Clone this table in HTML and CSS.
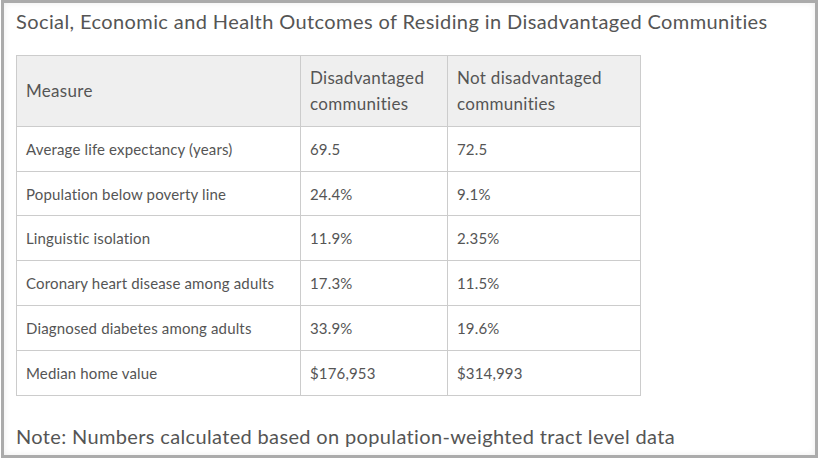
FILE: index.html
```html
<!DOCTYPE html>
<html lang="en">
<head>
<meta charset="utf-8">
<title>Social, Economic and Health Outcomes</title>
<link rel="stylesheet" href="styles.css">
</head>
<body>
<div class="frame">
  <h1 class="title">Social, Economic and Health Outcomes of Residing in Disadvantaged Communities</h1>
  <table class="data">
    <thead>
      <tr>
        <th class="c1">Measure</th>
        <th class="c2">Disadvantaged communities</th>
        <th class="c3">Not disadvantaged communities</th>
      </tr>
    </thead>
    <tbody>
      <tr><td>Average life expectancy (years)</td><td>69.5</td><td>72.5</td></tr>
      <tr><td>Population below poverty line</td><td>24.4%</td><td>9.1%</td></tr>
      <tr><td>Linguistic isolation</td><td>11.9%</td><td>2.35%</td></tr>
      <tr><td>Coronary heart disease among adults</td><td>17.3%</td><td>11.5%</td></tr>
      <tr><td>Diagnosed diabetes among adults</td><td>33.9%</td><td>19.6%</td></tr>
      <tr><td>Median home value</td><td>$176,953</td><td>$314,993</td></tr>
    </tbody>
  </table>
  <p class="note">Note: Numbers calculated based on population-weighted tract level data</p>
</div>
</body>
</html>
```

FILE: styles.css
```css
html, body {
  margin: 0;
  padding: 0;
  background: #ffffff;
}

body {
  font-family: "Lato", "Noto Sans", sans-serif;
  color: #555555;
}

.frame {
  box-sizing: border-box;
  width: 817px;
  height: 458px;
  margin-left: 1px;
  border: 3px solid #ababab;
  box-shadow: inset 0 0 6px rgba(0, 0, 0, 0.08);
  padding: 0 12px;
  display: flex;
  flex-direction: column;
  align-items: flex-start;
}

.title {
  margin: 5px 0 0;
  font-size: 20px;
  font-weight: 400;
  line-height: 26px;
  letter-spacing: 0.4px;
  color: #555555;
}

.data {
  margin-top: 21px;
  border-collapse: collapse;
  width: 625px;
  table-layout: fixed;
}

.data th,
.data td {
  border: 1px solid #cccccc;
  text-align: left;
  vertical-align: middle;
  padding: 9px;
  font-weight: 400;
}

.data th {
  background: #efefef;
  font-size: 17px;
  line-height: 26px;
  letter-spacing: 0.3px;
}

.data td {
  font-size: 15px;
  line-height: 26px;
  height: 26px;
  letter-spacing: 0.15px;
}

.data tbody tr:nth-child(2) td {
  padding-bottom: 8px;
}

.data .c1 { width: 265px; }
.data .c2 { width: 128px; }
.data .c3 { width: 174px; }

.note {
  margin: auto 0 7px;
  font-size: 20px;
  line-height: 24px;
  letter-spacing: 0.35px;
}
```
